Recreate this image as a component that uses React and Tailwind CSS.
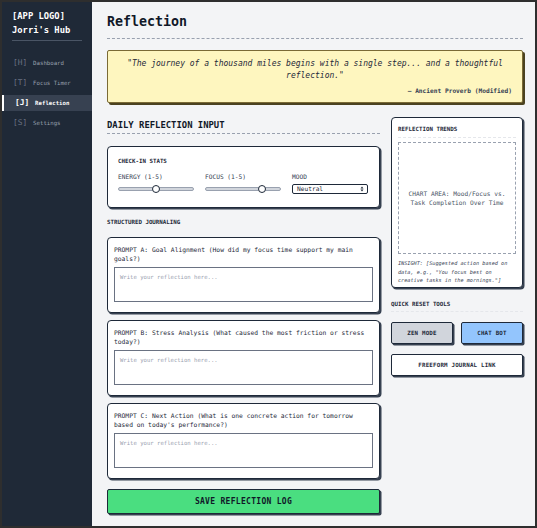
import { useState } from 'react';

const navItems = [
  { key: 'H', label: 'Dashboard' },
  { key: 'T', label: 'Focus Timer' },
  { key: 'J', label: 'Reflection', active: true },
  { key: 'S', label: 'Settings' },
];

const prompts = [
  { id: 'A', text: 'PROMPT A: Goal Alignment (How did my focus time support my main goals?)' },
  { id: 'B', text: 'PROMPT B: Stress Analysis (What caused the most friction or stress today?)' },
  { id: 'C', text: "PROMPT C: Next Action (What is one concrete action for tomorrow based on today's performance?)" },
];

const mono = "font-['DejaVu_Sans_Mono','Liberation_Mono',monospace]";

function Slider({ value, min = 1, max = 5 }) {
  const pct = ((value - min) / (max - min)) * 100;
  return (
    <div className="relative flex h-[10px] w-full items-center">
      <div className="h-[4px] w-full rounded-full border border-gray-400 bg-gray-300" />
      <div
        className="absolute top-1/2 h-[8px] w-[8px] -translate-x-1/2 -translate-y-1/2 rounded-full border-[1.3px] border-gray-800 bg-white"
        style={{ left: `${pct}%` }}
      />
    </div>
  );
}

function SelectBox({ value }) {
  return (
    <div className="flex h-[10px] w-full items-center justify-between rounded-[2px] border border-gray-800 bg-white pl-[4px] pr-[3px]">
      <span className="text-[6.2px] leading-none text-gray-800">{value}</span>
      <svg width="4" height="6" viewBox="0 0 4 6">
        <path d="M0.5 2.4 L2 0.6 L3.5 2.4 Z M0.5 3.6 L2 5.4 L3.5 3.6 Z" fill="#1f2937" />
      </svg>
    </div>
  );
}

function PromptCard({ text }) {
  const [entry, setEntry] = useState('');
  return (
    <div className="h-[76px] rounded-[4px] border-[1.5px] border-gray-800 bg-white px-[6px] pt-[7px] shadow-[1.5px_1.5px_0_#374151]">
      <p className="text-[6.3px] leading-[9px] text-gray-800">{text}</p>
      <textarea
        value={entry}
        onChange={(e) => setEntry(e.target.value)}
        placeholder="Write your reflection here..."
        className="mt-[4px] block h-[35px] w-full resize-none border-[1.5px] border-gray-500 bg-white px-[5px] py-[5px] text-[5.6px] leading-[8px] text-gray-800 outline-none placeholder:text-gray-400"
      />
    </div>
  );
}

function ToolButton({ children, className }) {
  return (
    <button
      className={`flex h-[22px] items-center justify-center rounded-[2px] border-[1.5px] border-gray-800 text-[5.8px] font-bold tracking-[0.2px] text-gray-800 shadow-[1.5px_1.5px_0_#374151] ${className}`}
    >
      {children}
    </button>
  );
}

export default function App() {
  return (
    <div className={`flex h-[528px] w-[537px] overflow-hidden border-2 border-[#2e2e2e] bg-[#f3f4f6] ${mono}`}>
      {/* Sidebar */}
      <aside className="w-[90px] shrink-0 bg-[#1f2937]">
        <div className="mx-[10px] border-b border-gray-600 pb-[3px] pt-[7px] text-[8.8px] font-bold leading-[14px] text-white">
          <div>[APP LOGO]</div>
          <div>Jorri's Hub</div>
        </div>
        <nav className="mt-[14px] flex flex-col gap-[4px]">
          {navItems.map(({ key, label, active }) =>
            active ? (
              <div key={key} className="flex h-[16px] items-center gap-[6px] border-l-2 border-white bg-[#374151] pl-[11px]">
                <span className="text-[7.8px] font-bold text-white">[{key}]</span>
                <span className="text-[5.7px] font-bold text-white">{label}</span>
              </div>
            ) : (
              <div key={key} className="flex h-[16px] items-center gap-[6px] pl-[11px]">
                <span className="text-[7.8px] text-gray-500">[{key}]</span>
                <span className="text-[5.7px] text-gray-400">{label}</span>
              </div>
            )
          )}
        </nav>
      </aside>

      {/* Main Content */}
      <main className="flex-1 pl-[15px] pr-[12px] pt-[12px] text-gray-800">
        <h1 className="border-b border-dashed border-gray-400 pb-[8px] text-[13.3px] font-bold leading-[16px] text-gray-900">
          Reflection
        </h1>

        <div className="mt-[11px] rounded-[2px] border border-[#7a6a35] bg-[#fef6bf] px-[10px] pb-[7px] pt-[7px] shadow-[2px_2px_0_#4b4220]">
          <p className="text-center text-[8px] italic leading-[12px] text-gray-800">
            "The journey of a thousand miles begins with a single step... and a thoughtful reflection."
          </p>
          <p className="mt-[5px] text-right text-[6.2px] font-bold leading-[8px] text-gray-700">
            — Ancient Proverb (Modified)
          </p>
        </div>

        <div className="mt-[14px] grid grid-cols-[273px_132px] gap-x-[11px]">
          {/* Left column */}
          <div>
            <h2 className="h-[17px] border-b border-dashed border-gray-400 text-[8.9px] font-bold leading-[16px] text-gray-900">
              DAILY REFLECTION INPUT
            </h2>

            <div className="mt-[12px] h-[62px] rounded-[4px] border-[1.5px] border-gray-800 bg-white pl-[10px] pr-[11px] pt-[10px] shadow-[1.5px_1.5px_0_#374151]">
              <div className="text-[5.8px] font-bold leading-[8px] text-gray-800">CHECK-IN STATS</div>
              <div className="mt-[8px] grid grid-cols-3 gap-x-[11px]">
                <div>
                  <div className="text-[6.2px] leading-[8px] text-gray-700">ENERGY (1-5)</div>
                  <div className="mt-[3px]"><Slider value={3} /></div>
                </div>
                <div>
                  <div className="text-[6.2px] leading-[8px] text-gray-700">FOCUS (1-5)</div>
                  <div className="mt-[3px]"><Slider value={4} /></div>
                </div>
                <div>
                  <div className="text-[6.2px] leading-[8px] text-gray-700">MOOD</div>
                  <div className="mt-[3px] flex h-[10px] items-center"><SelectBox value="Neutral" /></div>
                </div>
              </div>
            </div>

            <div className="mt-[10px] text-[5.8px] font-bold leading-[8px] text-gray-800">STRUCTURED JOURNALING</div>

            <div className="mt-[11px] flex flex-col gap-[7px]">
              {prompts.map((p) => (
                <PromptCard key={p.id} text={p.text} />
              ))}
            </div>

            <button className="mt-[10px] flex h-[25px] w-full items-center justify-center rounded-[2px] border-[1.5px] border-gray-800 bg-[#4ade80] text-[8px] font-bold tracking-[0.3px] text-gray-900 shadow-[1.5px_1.5px_0_#374151]">
              SAVE REFLECTION LOG
            </button>
          </div>

          {/* Right column */}
          <div>
            <div className="h-[171px] rounded-[4px] border-[1.5px] border-gray-800 bg-white px-[6px] pt-[7px] shadow-[1.5px_1.5px_0_#374151]">
              <div className="border-b border-dashed border-gray-200 pb-[4px] text-[5.8px] font-bold leading-[8px] text-gray-800">
                REFLECTION TRENDS
              </div>
              <div className="mt-[4px] flex h-[112px] items-center justify-center border border-dashed border-gray-400 px-[4px] text-center text-[6.2px] leading-[9px] text-gray-600">
                CHART AREA: Mood/Focus vs. Task Completion Over Time
              </div>
              <p className="mt-[5px] text-[5.2px] italic leading-[8.5px] text-gray-700">
                INSIGHT: [Suggested action based on data, e.g., "You focus best on creative tasks in the mornings."]
              </p>
            </div>

            <div className="mt-[12px] border-b border-dashed border-gray-200 pb-[3px] text-[5.8px] font-bold leading-[8px] text-gray-800">
              QUICK RESET TOOLS
            </div>
            <div className="mt-[10px] grid grid-cols-2 gap-x-[8px]">
              <ToolButton className="bg-gray-300">ZEN MODE</ToolButton>
              <ToolButton className="bg-[#93c5fd]">CHAT BOT</ToolButton>
            </div>
            <ToolButton className="mt-[10px] w-full bg-white">FREEFORM JOURNAL LINK</ToolButton>
          </div>
        </div>
      </main>
    </div>
  );
}
